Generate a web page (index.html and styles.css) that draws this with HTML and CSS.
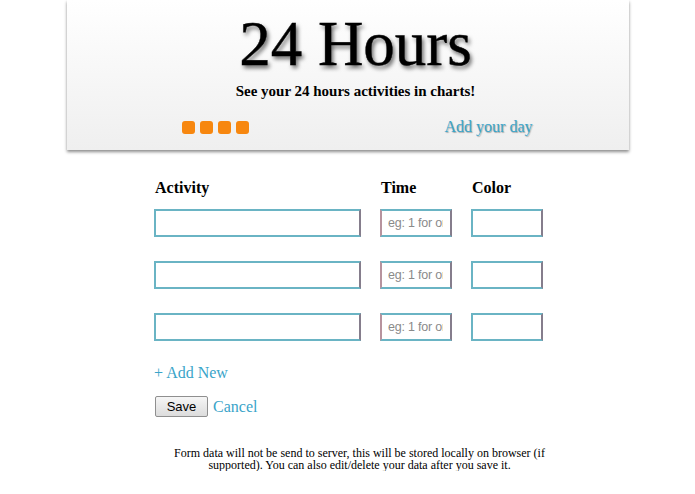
FILE: index.html
```html
<!DOCTYPE html>
<html>
<head>
<meta charset="utf-8">
<link rel="stylesheet" href="styles.css">
</head>
<body>
<header class="hero">
  <div class="hero-head">
    <h1 class="title">24 Hours</h1>
    <p class="tagline">See your 24 hours activities in charts!</p>
  </div>
  <div class="hero-bar">
    <div class="dots"><span></span><span></span><span></span><span></span></div>
    <a class="add-day" href="#">Add your day</a>
  </div>
</header>
<main class="form-area">
  <div class="grid">
    <div class="label">Activity</div><div class="label">Time</div><div class="label">Color</div>
    <input class="field" type="text"><input class="field time" type="text" placeholder="eg: 1 for one hour"><input class="field" type="text">
    <input class="field" type="text"><input class="field time" type="text" placeholder="eg: 1 for one hour"><input class="field" type="text">
    <input class="field" type="text"><input class="field time" type="text" placeholder="eg: 1 for one hour"><input class="field" type="text">
  </div>
  <a class="link add-new" href="#">+ Add New</a>
  <div class="actions"><button class="save">Save</button><a class="link" href="#">Cancel</a></div>
  <p class="note">Form data will not be send to server, this will be stored locally on browser (if supported). You can also edit/delete your data after you save it.</p>
</main>
</body>
</html>
```
FILE: styles.css
```css
html, body { margin: 0; padding: 0; background: #fff; }
body { font-family: "Liberation Serif", "Times New Roman", serif; color: #000; }

.hero {
  width: 562px;
  height: 150px;
  margin: 0 auto;
  background: linear-gradient(#ffffff, #efefef);
  box-shadow: 0 2px 3px rgba(0,0,0,0.45);
  display: flex;
  flex-direction: column;
  box-sizing: border-box;
  padding-top: 10px;
}
.hero-head {
  display: flex;
  flex-direction: column;
  align-items: center;
  padding-left: 16px;
}
.title {
  margin: 0;
  font-weight: normal;
  font-size: 63px;
  line-height: 68px;
  color: #000;
  text-shadow: 2px 3px 4px rgba(0,0,0,0.6);
  -webkit-text-stroke: 0.4px #000;
}
.tagline {
  margin: 3px 0 0;
  font-size: 15px;
  line-height: 20px;
  font-weight: bold;
}
.hero-bar {
  display: flex;
  justify-content: space-between;
  align-items: center;
  padding: 0 96px 0 115px;
  margin-top: 17px;
}
.dots { display: flex; gap: 5px; }
.dots span {
  width: 13px; height: 13px;
  background: #f7870f;
  border-radius: 3px;
}
.add-day {
  color: #3aa4c9;
  text-decoration: none;
  font-size: 16px;
  text-shadow: 1px 1px 1px rgba(0,0,0,0.3);
}

.form-area {
  width: 389px;
  margin: 0 auto;
  padding-top: 29px;
  position: relative;
  left: 1px;
}
.grid {
  display: grid;
  grid-template-columns: 207px 72px 72px;
  column-gap: 19px;
  row-gap: 24px;
}
.label {
  font-weight: bold;
  font-size: 16px;
  line-height: 18px;
  margin-bottom: -12px;
  padding-left: 1px;
}
.field {
  box-sizing: border-box;
  height: 28px;
  width: 100%;
  margin: 0;
  border: 2px solid #6ab4c4;
  border-right-color: #857d8c;
  background: #fff;
  padding: 2px 7px 2px 6px;
  font-family: "Liberation Sans", Arial, sans-serif;
  font-size: 12.5px;
  letter-spacing: -0.2px;
  outline: none;
}
.time { border-left-color: #b7939e; }
.field::placeholder { color: #8a8a8a; }
.link {
  color: #3aa4c9;
  text-decoration: none;
  font-size: 16px;
}
.add-new { display: block; margin-top: 23px; }
.actions { display: flex; align-items: center; gap: 5px; margin-top: 14px; }
.save {
  font-family: "Liberation Sans", Arial, sans-serif;
  font-size: 13px;
  width: 53px;
  height: 21px;
  margin: 0 0 0 1px;
  padding: 0;
  border: 1px solid #8f8f8f;
  border-radius: 2px;
  background: linear-gradient(#f6f6f6, #dcdcdc);
  color: #000;
}
.note {
  width: 385px;
  margin: 30px 0 0 13px;
  font-size: 12px;
  line-height: 12px;
  text-align: center;
}
```
